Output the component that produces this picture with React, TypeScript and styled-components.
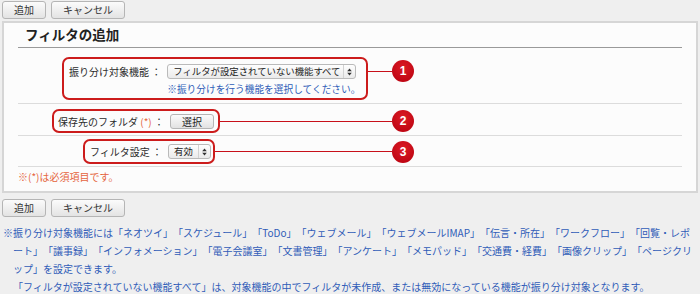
import React from 'react';
import styled, { createGlobalStyle } from 'styled-components';

const GlobalStyle = createGlobalStyle`
  html, body {
    margin: 0;
    padding: 0;
    background: #efefef;
  }
  body {
    font-family: "Noto Sans CJK JP", "Liberation Sans", sans-serif;
    font-size: 10px;
    color: #333;
    text-spacing-trim: space-all;
  }
`;

const Page = styled.div`
  box-sizing: border-box;
  width: 700px;
  height: 294px;
  overflow: hidden;
  padding: 1px 2px 0;
`;

const ButtonBar = styled.div<{ $mt?: number; $mb?: number }>`
  display: flex;
  gap: 5px;
  margin-top: ${(p) => p.$mt ?? 0}px;
  margin-bottom: ${(p) => p.$mb ?? 0}px;
`;

const Button = styled.button`
  box-sizing: border-box;
  height: 18px;
  padding: 0 11px;
  font-family: "Noto Sans CJK JP", sans-serif;
  font-size: 10px;
  line-height: 16px;
  color: #333;
  background: linear-gradient(#fbfbfb, #e3e3e3);
  border: 1px solid #b5b5b5;
  border-radius: 3px;
`;

const Panel = styled.section`
  background: #fcfcfc;
  border: 2px solid #d6d6d6;
  padding: 0 14px 7px;
`;

const Title = styled.h2`
  margin: 0;
  padding: 1px 0 2px 7px;
  font-size: 13.5px;
  font-weight: bold;
  line-height: 21px;
  color: #222;
  border-bottom: 1px solid #9a9a9a;
`;

const Row = styled.div<{ $pt: number; $pb: number }>`
  padding: ${(p) => p.$pt}px 0 ${(p) => p.$pb}px;
  border-bottom: 1px solid #dcdcdc;
`;

const Annot = styled.div<{ $top?: boolean }>`
  display: flex;
  align-items: ${(p) => (p.$top ? 'flex-start' : 'center')};
  width: 396px;
`;

const FieldBox = styled.div<{ $left: number; $pad: string }>`
  margin-left: ${(p) => p.$left}px;
  display: grid;
  grid-template-columns: auto auto;
  column-gap: 6px;
  row-gap: 4px;
  align-items: center;
  padding: ${(p) => p.$pad};
  border: 2px solid #cc1c1c;
  border-radius: 7px;
`;

const Label = styled.span`
  font-size: 10px;
  line-height: 15px;
  color: #2a2a2a;
  white-space: nowrap;
`;

const Required = styled.span`
  color: #e5643c;
`;

const Lead = styled.div<{ $offset?: number }>`
  flex: 1;
  display: flex;
  align-items: center;
  margin-top: ${(p) => p.$offset ?? 0}px;
`;

const Connector = styled.span`
  flex: 1;
  height: 1px;
  background: #c8101a;
`;

const Badge = styled.span`
  width: 22px;
  height: 22px;
  border-radius: 50%;
  background: radial-gradient(circle at 50% 35%, #dc1b25 0%, #b6000e 100%);
  color: #fff;
  font: bold 12px "Liberation Sans", sans-serif;
  display: flex;
  align-items: center;
  justify-content: center;
`;

const SelectBox = styled.div<{ $w: number }>`
  box-sizing: border-box;
  width: ${(p) => p.$w}px;
  height: 15px;
  display: flex;
  align-items: stretch;
  border: 1px solid #bababa;
  border-radius: 3px;
  background: linear-gradient(#fefefe, #eaeaea);
  font-size: 9.4px;
  line-height: 13px;
  color: #222;
`;

const SelectText = styled.span`
  flex: 1;
  padding-left: 5px;
  white-space: nowrap;
  overflow: hidden;
`;

const SelectArrow = styled.span`
  width: 11px;
  border-left: 1px solid #d2d2d2;
  display: flex;
  align-items: center;
  justify-content: center;
`;

const SmallButton = styled.button`
  box-sizing: border-box;
  width: 44px;
  height: 15px;
  padding: 0;
  font-family: "Noto Sans CJK JP", sans-serif;
  font-size: 10px;
  line-height: 13px;
  color: #222;
  background: linear-gradient(#fbfbfb, #e2e2e2);
  border: 1px solid #b5b5b5;
  border-radius: 3px;
`;

const Hint = styled.div`
  grid-column: 2;
  font-size: 9.7px;
  line-height: 13px;
  color: #2f5cb8;
  white-space: nowrap;
`;

const RequiredNote = styled.div`
  padding-top: 3px;
  font-size: 10px;
  line-height: 14px;
  color: #e5643c;
`;

const Notes = styled.p`
  margin: 7px 0 0;
  padding: 0 2px 0 11px;
  text-indent: -10px;
  font-size: 10px;
  line-height: 18px;
  color: #2f5cb8;
`;

function Select({ width, value }: { width: number; value: string }) {
  return (
    <SelectBox $w={width}>
      <SelectText>{value}</SelectText>
      <SelectArrow>
        <svg width="5" height="8" viewBox="0 0 5 8">
          <path d="M2.5 0.5 L4.8 3.2 H0.2 Z" fill="#333" />
          <path d="M2.5 7.5 L4.8 4.8 H0.2 Z" fill="#333" />
        </svg>
      </SelectArrow>
    </SelectBox>
  );
}

export default function App() {
  return (
    <Page>
      <GlobalStyle />
      <ButtonBar $mb={2}>
        <Button>追加</Button>
        <Button>キャンセル</Button>
      </ButtonBar>

      <Panel>
        <Title>フィルタの追加</Title>

        <Row $pt={9} $pb={3}>
          <Annot $top>
            <FieldBox $left={44} $pad="5px 6px 2px 5px">
              <Label>振り分け対象機能 ：</Label>
              <Select width={189} value="フィルタが設定されていない機能すべて" />
              <Hint>※振り分けを行う機能を選択してください。</Hint>
            </FieldBox>
            <Lead $offset={3}>
              <Connector />
              <Badge>1</Badge>
            </Lead>
          </Annot>
        </Row>

        <Row $pt={5} $pb={2}>
          <Annot>
            <FieldBox $left={34} $pad="3px 4px 2px 4px">
              <Label>
                保存先のフォルダ <Required>(*)</Required> ：
              </Label>
              <SmallButton>選択</SmallButton>
            </FieldBox>
            <Lead>
              <Connector />
              <Badge>2</Badge>
            </Lead>
          </Annot>
        </Row>

        <Row $pt={3} $pb={2}>
          <Annot>
            <FieldBox $left={65} $pad="3px 2px 3px 5px">
              <Label>フィルタ設定 ：</Label>
              <Select width={43} value="有効" />
            </FieldBox>
            <Lead>
              <Connector />
              <Badge>3</Badge>
            </Lead>
          </Annot>
        </Row>

        <RequiredNote>※(*)は必須項目です。</RequiredNote>
      </Panel>

      <ButtonBar $mt={6}>
        <Button>追加</Button>
        <Button>キャンセル</Button>
      </ButtonBar>

      <Notes>
        ※振り分け対象機能には「ネオツイ」「スケジュール」「ToDo」「ウェブメール」「ウェブメールIMAP」「伝言・所在」「ワークフロー」「回覧・レポート」「議事録」「インフォメーション」「電子会議室」「文書管理」「アンケート」「メモパッド」「交通費・経費」「画像クリップ」「ページクリップ」を設定できます。
        <br />
        「フィルタが設定されていない機能すべて」は、対象機能の中でフィルタが未作成、または無効になっている機能が振り分け対象となります。
      </Notes>
    </Page>
  );
}
